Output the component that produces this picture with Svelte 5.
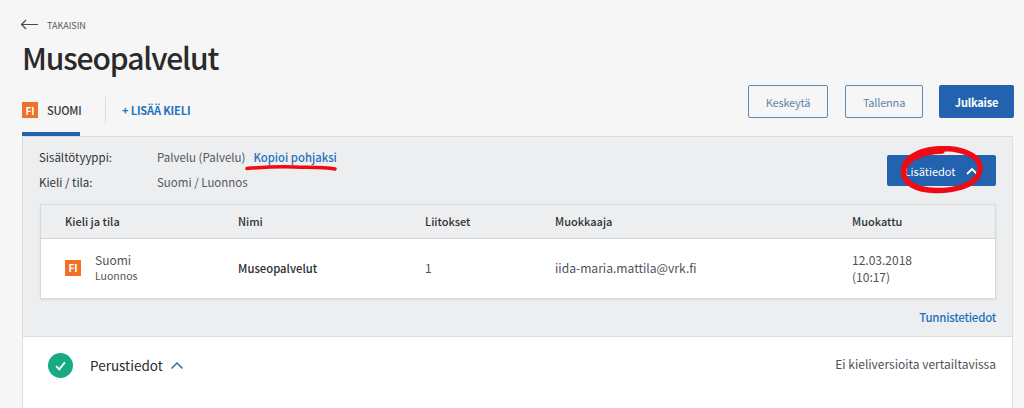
<script lang="ts">
  const columns = ['Kieli ja tila', 'Nimi', 'Liitokset', 'Muokkaaja', 'Muokattu'];
</script>

<div class="page">
  <a class="back" href="#back">
    <svg viewBox="0 0 18 12" aria-hidden="true">
      <path d="M18 5.500H1.500M6 1L1.500 5.500L6 10" />
    </svg>
    <span>TAKAISIN</span>
  </a>
  <h1>Museopalvelut</h1>

  <div class="toolbar">
    <div class="tabs">
      <div class="tab">
        <span class="flag">FI</span>
        <span>SUOMI</span>
      </div>
      <div class="divider"></div>
      <a class="add" href="#add">+ LISÄÄ KIELI</a>
    </div>
    <div class="actions">
      <button class="outline keskeyta" type="button">Keskeytä</button>
      <button class="outline tallenna" type="button">Tallenna</button>
      <button class="primary" type="button">Julkaise</button>
    </div>
  </div>

  <div class="panel">
    <div class="details">
      <div class="meta">
        <div class="meta-row">
          <span class="meta-label">Sisältötyyppi:</span>
          <span>Palvelu (Palvelu)</span>
          <a class="copy" href="#copy">Kopioi pohjaksi</a>
          <svg class="underline" viewBox="0 0 92 7" aria-hidden="true">
            <path d="M2 4.500C20 3 34 2.500 50 3C62 3.500 78 3 90 5" />
          </svg>
        </div>
        <div class="meta-row">
          <span class="meta-label">Kieli / tila:</span>
          <span>Suomi / Luonnos</span>
        </div>
      </div>
      <button class="more" type="button">
        <span>Lisätiedot</span>
        <svg class="more-chevron" viewBox="0 0 12 8" aria-hidden="true">
          <path d="M1 7L6 2L11 7" />
        </svg>
        <svg class="scribble" viewBox="0 0 84 48" aria-hidden="true">
          <path d="M4 26C2 14 16 5 36 3C54 1 72 6 78 15C83 24 79 35 62 41C46 46 24 46 12 39C5 35 2 30 4 22C8 12 22 6 42 5" />
        </svg>
      </button>
    </div>

    <div class="table">
      <div class="row head">
        {#each columns as column}
          <div>{column}</div>
        {/each}
      </div>
      <div class="row body">
        <div class="lang">
          <span class="flag">FI</span>
          <div class="lang-text">
            <div class="lang-name">Suomi</div>
            <div class="lang-state">Luonnos</div>
          </div>
        </div>
        <div class="name">Museopalvelut</div>
        <div>1</div>
        <div class="editor">iida-maria.mattila@vrk.fi</div>
        <div class="date">12.03.2018<br />(10:17)</div>
      </div>
    </div>

    <div class="ids"><a href="#ids">Tunnistetiedot</a></div>

    <div class="section">
      <div class="section-title">
        <span class="check">
          <svg viewBox="0 0 12 12" aria-hidden="true">
            <path d="M2.500 6.500L5 9L9.500 3.500" />
          </svg>
        </span>
        <span class="section-name">Perustiedot</span>
        <svg class="section-chevron" viewBox="0 0 14 9" aria-hidden="true">
          <path d="M1.500 7.500L7 2L12.500 7.500" />
        </svg>
      </div>
      <div class="section-note">Ei kieliversioita vertailtavissa</div>
    </div>
  </div>
</div>

<style>
  :global(body) {
    margin: 0;
    background: #f6f6f6;
    overflow: hidden;
  }

  .page {
    height: 408px;
    box-sizing: border-box;
    padding: 18px 10px 0 22px;
    font-family: 'Noto Sans CJK SC', 'Noto Sans', sans-serif;
    font-size: 12px;
    color: #3c3c40;
    overflow: hidden;
  }

  a {
    text-decoration: none;
  }

  .back {
    display: flex;
    align-items: center;
    gap: 9px;
    height: 14px;
    margin-left: -2px;
    font-size: 9px;
    color: #55585c;
  }

  .back svg {
    width: 18px;
    height: 12px;
    flex-shrink: 0;
    fill: none;
    stroke: #4a4a4a;
    stroke-width: 1.2;
  }

  h1 {
    margin: 3px 0 0;
    font-size: 30px;
    line-height: 44px;
    font-weight: 500;
    letter-spacing: -1.1px;
    color: #2a2a2c;
  }

  .toolbar {
    display: flex;
    justify-content: space-between;
    height: 57px;
  }

  .tabs {
    display: flex;
    align-items: flex-start;
    height: 48px;
    align-self: flex-end;
  }

  .tab {
    display: flex;
    align-items: center;
    gap: 9px;
    width: 58px;
    height: 44px;
    border-bottom: 4px solid #2362ae;
    font-size: 11px;
    font-weight: 500;
    letter-spacing: -0.25px;
    color: #34363a;
  }

  .flag {
    display: grid;
    place-items: center;
    flex-shrink: 0;
    width: 16px;
    height: 16px;
    background: #ee7127;
    color: #fff;
    font-size: 10px;
    font-weight: 700;
    letter-spacing: 0;
  }

  .divider {
    width: 1px;
    height: 26px;
    margin: 9px 0 0 25px;
    background: #dcdcdc;
  }

  .add {
    margin: 15px 0 0 16px;
    font-size: 11px;
    line-height: 14px;
    font-weight: 700;
    letter-spacing: -0.15px;
    color: #1f72bd;
  }

  .actions {
    display: flex;
    gap: 17px;
    padding-top: 6px;
    height: 33px;
  }

  button {
    font-family: inherit;
    cursor: pointer;
    border-radius: 2px;
    padding: 0;
  }

  .outline {
    height: 33px;
    border: 1px solid #5f88b8;
    background: #f6f6f6;
    color: #5f84ae;
    font-size: 11px;
    letter-spacing: -0.2px;
  }

  .keskeyta {
    width: 80px;
  }

  .tallenna {
    width: 78px;
    margin-right: -1px;
  }

  .primary {
    width: 75px;
    height: 33px;
    border: none;
    background: #2362ae;
    color: #fff;
    font-size: 11px;
    font-weight: 700;
    letter-spacing: -0.2px;
  }

  .panel {
    height: 272px;
    margin-right: 1px;
    box-sizing: border-box;
    border: 1px solid #dcdddf;
    border-bottom: none;
    background: #eceef0;
    display: flex;
    flex-direction: column;
  }

  .details {
    display: flex;
    justify-content: space-between;
    padding: 7px 16px 0;
    height: 67px;
    box-sizing: border-box;
  }

  .meta {
    color: #55585c;
    font-size: 11.5px;
  }

  .meta-row {
    position: relative;
    display: flex;
    height: 25px;
    align-items: center;
  }

  .meta-label {
    width: 118px;
    color: #303236;
  }

  .copy {
    margin-left: 8px;
    font-weight: 500;
    font-size: 11.3px;
    color: #1f72bd;
  }

  .underline {
    position: absolute;
    left: 206px;
    top: 20px;
    width: 92px;
    height: 7px;
    fill: none;
    stroke: #f00a14;
    stroke-width: 3.500;
    stroke-linecap: round;
  }

  .more {
    position: relative;
    display: flex;
    align-items: center;
    justify-content: center;
    gap: 11px;
    width: 109px;
    height: 31px;
    margin-top: 11px;
    border: none;
    background: #2362ae;
    color: #fff;
    font-size: 11px;
  }

  .more-chevron {
    width: 12px;
    height: 8px;
    flex-shrink: 0;
    fill: none;
    stroke: #fff;
    stroke-width: 1.800;
  }

  .scribble {
    position: absolute;
    left: 13px;
    top: -9px;
    width: 84px;
    height: 48px;
    fill: none;
    stroke: #f00a14;
    stroke-width: 5.500;
    stroke-linecap: round;
  }

  .table {
    margin: 0 16px 0 17px;
    border: 1px solid #d6d8da;
    background: #fff;
    box-shadow: 0 1px 2px rgba(0, 0, 0, 0.08);
  }

  .row {
    display: grid;
    grid-template-columns: 173px 187px 130px 297px 1fr;
    padding-left: 24px;
    font-size: 12px;
    align-items: center;
  }

  .head {
    height: 31px;
    padding-bottom: 2px;
    background: #eceef0;
    border-bottom: 1px solid #d0d2d4;
    color: #303236;
    font-size: 11px;
    font-weight: 500;
  }

  .body {
    height: 57px;
    padding-bottom: 2px;
    color: #505256;
  }

  .lang {
    display: flex;
    align-items: center;
    gap: 14px;
  }

  .lang-name {
    line-height: 17px;
  }

  .lang-state {
    font-size: 10.5px;
    line-height: 16px;
  }

  .name {
    font-weight: 500;
    font-size: 11.3px;
    color: #2c2e32;
  }

  .editor {
    font-size: 12.1px;
  }

  .date {
    line-height: 17px;
  }

  .ids {
    display: flex;
    justify-content: flex-end;
    align-items: center;
    height: 37px;
    padding: 0 16px 2px;
    box-sizing: border-box;
    font-size: 11.5px;
    font-weight: 500;
    letter-spacing: -0.25px;
  }

  .ids a {
    color: #1f72bd;
  }

  .section {
    flex: 1;
    display: flex;
    justify-content: space-between;
    background: #fff;
    border-top: 1px solid #dcdddf;
    padding: 16px 16px 0 25px;
  }

  .section-title {
    display: flex;
    align-items: flex-start;
    gap: 17px;
  }

  .check {
    display: grid;
    place-items: center;
    flex-shrink: 0;
    width: 25px;
    height: 25px;
    border-radius: 50%;
    background: #16ab82;
  }

  .check svg {
    width: 15px;
    height: 15px;
    fill: none;
    stroke: #fff;
    stroke-width: 1.500;
  }

  .section-name {
    font-size: 13.5px;
    line-height: 24px;
    color: #2a2a2c;
  }

  .section-chevron {
    width: 14px;
    height: 9px;
    flex-shrink: 0;
    margin: 8px 0 0 -10px;
    fill: none;
    stroke: #2f6aa8;
    stroke-width: 1.500;
  }

  .section-note {
    font-size: 12px;
    line-height: 20px;
    margin-top: 1px;
    color: #505256;
  }
</style>
